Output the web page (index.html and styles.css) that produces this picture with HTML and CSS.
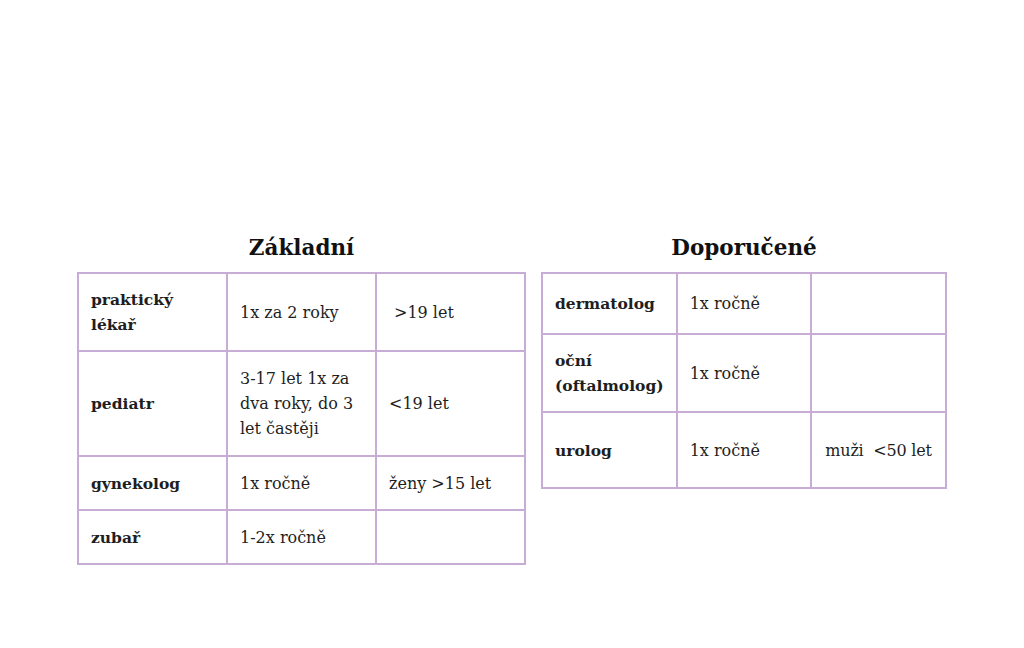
FILE: index.html
```html
<!DOCTYPE html>
<html lang="cs">
<head>
<meta charset="utf-8">
<link rel="stylesheet" href="styles.css">
</head>
<body>
<div class="page">
  <section class="block block-left">
    <h2 class="title">Základní</h2>
    <table class="grid">
      <tr class="r79"><th>praktický lékař</th><td>1x za 2 roky</td><td class="ind">&gt;19 let</td></tr>
      <tr class="r105"><th>pediatr</th><td>3-17 let 1x za dva roky, do 3 let častěji</td><td>&lt;19 let</td></tr>
      <tr class="r54"><th>gynekolog</th><td>1x ročně</td><td>ženy &gt;15 let</td></tr>
      <tr class="r54"><th>zubař</th><td>1-2x ročně</td><td></td></tr>
    </table>
  </section>
  <section class="block block-right">
    <h2 class="title">Doporučené</h2>
    <table class="grid">
      <tr class="r61"><th>dermatolog</th><td>1x ročně</td><td></td></tr>
      <tr class="r79"><th>oční (oftalmolog)</th><td>1x ročně</td><td></td></tr>
      <tr class="r76"><th>urolog</th><td>1x ročně</td><td class="tight">muži&nbsp; &lt;50 let</td></tr>
    </table>
  </section>
</div>
</body>
</html>
```

FILE: styles.css
```css
html, body {
  margin: 0;
  padding: 0;
  background: #ffffff;
}
body {
  width: 1024px;
  height: 648px;
  font-family: "DejaVu Serif", "Liberation Serif", serif;
  color: #1e1e1e;
}
.page {
  display: flex;
  align-items: flex-start;
  padding: 233px 0 0 77px;
  gap: 15px;
}
.block-left { width: 449px; }
.block-right { width: 406px; }
.title {
  margin: 0 0 9px 0;
  height: 30px;
  line-height: 30px;
  text-align: center;
  font-size: 21.5px;
  font-weight: bold;
  color: #111;
}
.grid {
  width: 100%;
  border-collapse: collapse;
  table-layout: fixed;
}
.grid th, .grid td {
  border: 2px solid #c7acd6;
  padding: 0 12px;
  text-align: left;
  vertical-align: middle;
  font-size: 16px;
  line-height: 25px;
  font-weight: normal;
}
.grid th {
  font-weight: bold;
  font-size: 15.5px;
}
.grid td.ind { padding-left: 17px; }
.grid td.tight {
  white-space: nowrap;
  padding: 0 0 0 13px;
  letter-spacing: -0.2px;
}
.r79 { height: 78px; }
.r105 { height: 105px; }
.r54 { height: 54px; }
.r61 { height: 61px; }
.r76 { height: 76px; }
```
